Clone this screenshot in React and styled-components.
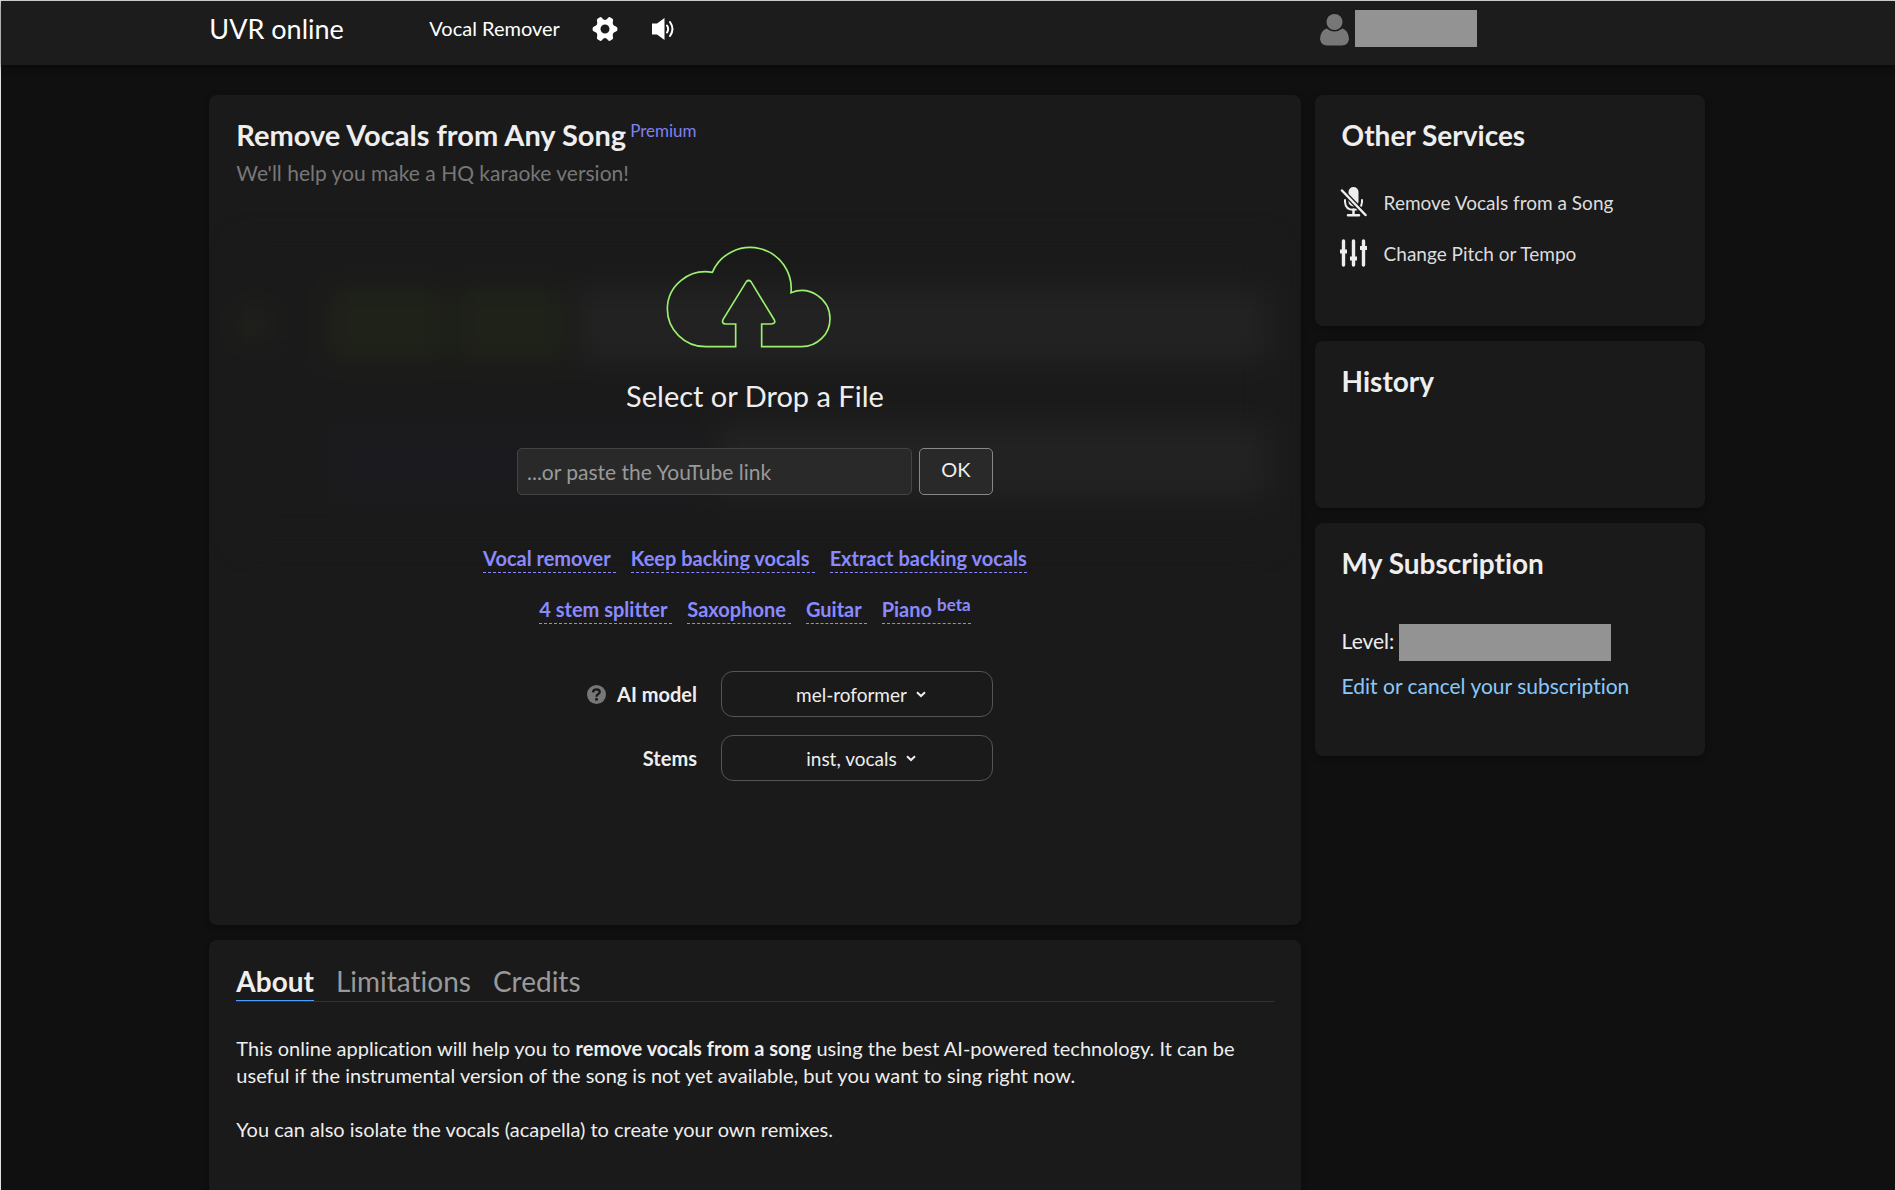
import React, { useState } from "react";
import styled, { createGlobalStyle } from "styled-components";

const GlobalStyle = createGlobalStyle`
  * { box-sizing: border-box; }
  body {
    margin: 0;
    background: #101010;
    color: #eee;
    font: 21px/27px Lato, "Noto Sans", sans-serif;
    font-variant-ligatures: none;
  }
  button, input, select { font: inherit; color: inherit; font-variant-ligatures: inherit; }
  h1, h2, p { margin: 0; }
  a { text-decoration: none; }
`;

const Page = styled.div`
  display: flex;
  flex-direction: column;
  min-height: 100vh;
  border-top: 1px solid #dfe3e1;
  border-left: 1px solid #dfe3e1;
`;

const Header = styled.header`
  display: grid;
  grid-template-columns: minmax(0, 1fr) 390px;
  column-gap: 14px;
  height: 64px;
  padding: 0 calc(10% + 1px) 0 11%;
  background: #1c1c1c;
  box-shadow: 0 2px 6px rgba(0, 0, 0, 0.5);
`;

const Nav = styled.nav`
  display: flex;
  align-items: center;
  height: 55px;
  color: #fff;
`;

const Logo = styled.a`
  width: 220px;
  color: #fff;
  font-size: 27px;
  line-height: 36px;
`;

const NavLink = styled.a`
  width: 163px;
  color: #fff;
  font-size: 20px;
`;

const IconButton = styled.button`
  display: flex;
  align-items: center;
  width: 60px;
  padding: 0;
  border: 0;
  background: none;
  color: #fff;
  cursor: pointer;
`;

const Account = styled.div`
  display: flex;
  align-items: center;
  gap: 6px;
  height: 54px;
  padding-left: 5px;
  color: #777;
  svg { margin-top: 4px; }
`;

const Masked = styled.span`
  display: block;
  width: ${(p) => p.$width};
  height: 37px;
  background: #939393;
`;

const Columns = styled.div`
  flex: 1;
  display: grid;
  grid-template-columns: minmax(0, 1fr) 390px;
  column-gap: 14px;
  padding: 30px calc(10% + 1px) 0 11%;
`;

const Stack = styled.div`
  display: flex;
  flex-direction: column;
  gap: 15px;
`;

const Card = styled.section`
  position: relative;
  min-height: ${(p) => p.$minHeight || "0"};
  padding: 22px 27px;
  border-radius: 8px;
  background: #1a1a1a;
  box-shadow: 0 2px 6px rgba(0, 0, 0, 0.35);
`;

const AboutCard = styled(Card)`
  flex: 1;
  border-radius: 8px 8px 0 0;
`;

const MainTitle = styled.h1`
  font-size: 29px;
  line-height: 36px;
  font-weight: 700;
`;

const SideTitle = styled.h2`
  font-size: 28px;
  line-height: 36px;
  font-weight: 700;
`;

const Intro = styled.div`
  position: relative;
`;

const Heading = styled.div`
  display: flex;
  align-items: flex-start;
  gap: 4px;
`;

const Premium = styled.a`
  color: #8080f0;
  font-size: 17px;
  line-height: 27px;
`;

const Subtitle = styled.p`
  padding-top: 6px;
  color: #777;
`;

const Backdrop = styled.div`
  position: absolute;
  inset: 150px 32px auto;
  display: flex;
  flex-direction: column;
  gap: 62px;
  padding: 43px 0;
  background: #1a1a1a;
  filter: blur(14px);
`;

const Track = styled.div`
  display: grid;
  grid-template-columns: 24px ${(p) => p.$columns} minmax(0, 1fr);
  column-gap: 14px;
  height: 74px;
`;

const Wave = styled.span`
  margin: ${(p) => p.$inset || "0"};
  background: ${(p) => p.$color};
`;

const Uploader = styled.div`
  position: relative;
  display: flex;
  flex-direction: column;
  align-items: center;
`;

const DropZone = styled.button`
  display: flex;
  flex-direction: column;
  align-items: center;
  gap: 29px;
  margin-top: 60px;
  padding: 0;
  border: 0;
  background: none;
  font-size: 29px;
  line-height: 36px;
  cursor: pointer;
`;

const LinkForm = styled.form`
  display: flex;
  gap: 7px;
  width: 476px;
  margin-top: 34px;
`;

const UrlInput = styled.input`
  flex: 1;
  min-width: 0;
  height: 47px;
  padding: 0 9px;
  border: 1px solid #444;
  border-radius: 5px;
  background: #292929;
  &::placeholder { color: #999; opacity: 1; }
`;

const OkButton = styled.button`
  width: 74px;
  padding: 0 0 4px;
  border: 1px solid #888;
  border-radius: 5px;
  background: #292929;
  font-size: 20px;
`;

const Modes = styled.div`
  display: flex;
  flex-direction: column;
  align-items: center;
  gap: 22px;
  margin-top: 49px;
`;

const ModeRow = styled.div`
  display: flex;
  gap: 15px;
`;

const Mode = styled.a`
  height: 29px;
  padding-right: ${(p) => (p.$last ? "0" : "5px")};
  border-bottom: 1px dashed #8a8aff;
  color: #8a8aff;
  font-size: 20px;
  font-weight: 700;
  line-height: 29px;
  sup {
    margin-left: 5px;
    font-size: 17px;
    line-height: 0;
    vertical-align: 6px;
  }
`;

const Options = styled.div`
  display: grid;
  grid-template-columns: 110px 272px;
  column-gap: 24px;
  row-gap: 18px;
  align-items: center;
  margin: 47px 0 0 70px;
`;

const OptionLabel = styled.label`
  display: flex;
  justify-content: flex-end;
  align-items: center;
  gap: 11px;
  font-size: 20px;
  font-weight: 700;
  white-space: nowrap;
  svg { flex: none; }
`;

const SelectBox = styled.div`
  display: flex;
  align-items: center;
  justify-content: center;
  gap: 9px;
  height: 46px;
  padding-left: 8px;
  border: 1px solid #555;
  border-radius: 12px;
`;

const Select = styled.select`
  appearance: none;
  field-sizing: content;
  padding: 0;
  border: 0;
  background: transparent;
  font-size: 19px;
  line-height: 27px;
  option { background: #1a1a1a; }
`;

const Tabs = styled.div`
  display: flex;
  gap: 22px;
  border-bottom: 1px solid #333;
`;

const Tab = styled.button`
  height: 39px;
  padding: 0;
  border: 0;
  border-bottom: 1px solid ${(p) => (p.$active ? "#4c9dff" : "transparent")};
  background: none;
  color: ${(p) => (p.$active ? "#eee" : "#999")};
  font-size: 28px;
  font-weight: ${(p) => (p.$active ? 700 : 400)};
  line-height: 36px;
  cursor: pointer;
`;

const Article = styled.div`
  display: flex;
  flex-direction: column;
  gap: 27px;
  padding-top: 33px;
  font-size: 20px;
`;

const Services = styled.div`
  display: flex;
  flex-direction: column;
  gap: 21px;
  margin: 34px 0 0 -2px;
`;

const Service = styled.a`
  display: flex;
  align-items: center;
  gap: 17px;
  height: 30px;
  color: #ddd;
  font-size: 19px;
  svg { flex: none; }
`;

const Level = styled.div`
  display: flex;
  align-items: flex-start;
  gap: 5px;
  margin-top: 43px;
  line-height: 34px;
`;

const EditLink = styled.a`
  display: block;
  margin-top: 11px;
  color: #8ac8fa;
`;

const GearIcon = () => (
  <svg width="26" height="26" viewBox="0 0 26 26" aria-hidden="true">
    <path
      fill="currentColor"
      fillRule="evenodd"
      d="M7.500 1.500 Q9 0.500 10 2 Q11.500 4 13 4 Q14.500 4 16 2 Q17 0.500 18.500 1.500 L20.500 2.700 Q21.500 3.500 21 5 Q20.300 7.300 21.200 8.700 Q22 10 24 10.500 Q25.500 11 25.500 13 Q25.500 15 24 15.500 Q22 16 21.200 17.300 Q20.300 18.700 21 21 Q21.500 22.500 20.500 23.300 L18.500 24.500 Q17 25.500 16 24 Q14.500 22 13 22 Q11.500 22 10 24 Q9 25.500 7.500 24.500 L5.500 23.300 Q4.500 22.500 5 21 Q5.700 18.700 4.800 17.300 Q4 16 2 15.500 Q0.500 15 0.500 13 Q0.500 11 2 10.500 Q4 10 4.800 8.700 Q5.700 7.300 5 5 Q4.500 3.500 5.500 2.700 Z M13 8.500 A4.500 4.500 0 1 0 13 17.500 A4.500 4.500 0 1 0 13 8.500 Z"
    />
  </svg>
);

const SpeakerIcon = () => (
  <svg width="23" height="22" viewBox="0 0 23 22" aria-hidden="true">
    <path fill="currentColor" d="M0 5.500 H5 L12.500 0 V22 L5 16.500 H0 Z" />
    <path
      fill="none"
      stroke="currentColor"
      strokeWidth="2"
      strokeLinecap="round"
      d="M15 7.500 Q17.300 11 15 14.500 M18 4 Q23 11 18 18"
    />
  </svg>
);

const UserIcon = () => (
  <svg width="29" height="32" viewBox="0 0 29 32" aria-hidden="true">
    <ellipse cx="14.500" cy="8" rx="8" ry="8" fill="currentColor" />
    <path
      fill="currentColor"
      d="M6.500 14.500 Q14.500 20.500 22.500 14.500 Q28.500 16.500 29 25 Q28 31.500 22 31.500 H7 Q1 31.500 0 25 Q0.500 16.500 6.500 14.500 Z"
    />
  </svg>
);

const CloudIcon = () => (
  <svg width="178" height="103" viewBox="78 46 534 309" aria-hidden="true">
    <path
      fill="none"
      stroke="#9cf06c"
      strokeWidth="5"
      d="M287 348 H197 A115 114 0 0 1 82 234 A115 112 0 0 1 217 125 A123.300 123.300 0 0 1 453 186 A85 85 0 0 1 570 264 A85 84 0 0 1 485 348 H365 V280 H394 Q408 279 403 268 L333 153 Q326 146 319 153 L249 267 Q244 279 257 280 H287 Z"
    />
  </svg>
);

const HelpIcon = () => (
  <svg width="19" height="19" viewBox="0 0 19 19" aria-hidden="true">
    <circle cx="9.500" cy="9.500" r="9.500" fill="#777" />
    <path
      fill="none"
      stroke="#1a1a1a"
      strokeWidth="2.400"
      d="M6 7.300 Q6.300 4.400 9.500 4.400 Q12.700 4.500 12.700 7 Q12.600 8.400 11 9.200 Q9.500 10 9.500 11.800"
    />
    <circle cx="9.500" cy="14.300" r="1.500" fill="#1a1a1a" />
  </svg>
);

const ChevronIcon = () => (
  <svg width="10" height="7" viewBox="0 0 10 7" aria-hidden="true">
    <path fill="none" stroke="#eee" strokeWidth="2" d="M1 1.200 L5 5 L9 1.200" />
  </svg>
);

const MicOffIcon = () => (
  <svg width="27" height="30" viewBox="0 0 27 30" aria-hidden="true">
    <g fill="none" stroke="#eee" strokeLinecap="round">
      <path strokeWidth="2" d="M5 13 V15 Q5.500 22.800 13.500 22.800 Q21.500 22.800 22 15 V13" />
      <path strokeWidth="2.500" d="M13.500 22.500 V27.500 M8 28.300 H19" />
    </g>
    <rect x="8.500" y="0" width="10" height="19.500" rx="5" fill="#eee" />
    <path stroke="#1a1a1a" strokeWidth="5" d="M0 1.500 L27 29.500" />
    <path stroke="#eee" strokeWidth="2.500" strokeLinecap="round" d="M2 3.500 L25.500 28" />
  </svg>
);

const SlidersIcon = () => (
  <svg width="27" height="28" viewBox="0 0 27 28" aria-hidden="true">
    <path
      stroke="#eee"
      strokeWidth="3.400"
      strokeLinecap="round"
      d="M3.500 2 V26 M13.500 2 V26 M23.500 2 V26"
    />
    <path stroke="#eee" strokeWidth="4" d="M0 12.500 H7 M10 19.500 H17 M20 9 H27" />
  </svg>
);

const modeRows = [
  ["Vocal remover", "Keep backing vocals", "Extract backing vocals"],
  ["4 stem splitter", "Saxophone", "Guitar", "Piano"],
];

const tabNames = ["About", "Limitations", "Credits"];

function Waveforms() {
  return (
    <Backdrop aria-hidden="true">
      <Track $columns="36px 114px 108px">
        <Wave $color="#24261e" $inset="22px 0" />
        <Wave $color="#1a1a1a" />
        <Wave $color="#1f2219" />
        <Wave $color="#1f2219" />
        <Wave $color="#222222" />
      </Track>
      <Track $columns="36px 375px">
        <Wave $color="#1a1a1a" />
        <Wave $color="#1a1a1a" />
        <Wave $color="#1b1b1f" />
        <Wave $color="#222222" />
      </Track>
    </Backdrop>
  );
}

function SeparationOptions() {
  return (
    <Options>
      <OptionLabel htmlFor="model">
        <HelpIcon />
        AI model
      </OptionLabel>
      <SelectBox>
        <Select id="model"><option>mel-roformer</option></Select>
        <ChevronIcon />
      </SelectBox>
      <OptionLabel htmlFor="stems">Stems</OptionLabel>
      <SelectBox>
        <Select id="stems"><option>inst, vocals</option></Select>
        <ChevronIcon />
      </SelectBox>
    </Options>
  );
}

export default function App() {
  const [tab, setTab] = useState("About");
  return (
    <Page>
      <GlobalStyle />
      <Header>
        <Nav>
          <Logo href="#">UVR online</Logo>
          <NavLink href="#">Vocal Remover</NavLink>
          <IconButton aria-label="Settings"><GearIcon /></IconButton>
          <IconButton aria-label="Sound"><SpeakerIcon /></IconButton>
        </Nav>
        <Account>
          <UserIcon />
          <Masked $width="122px" />
        </Account>
      </Header>
      <Columns>
        <Stack as="main">
          <Card $minHeight="830px">
            <Waveforms />
            <Intro>
              <Heading>
                <MainTitle>Remove Vocals from Any Song</MainTitle>
                <Premium href="#">Premium</Premium>
              </Heading>
              <Subtitle>We'll help you make a HQ karaoke version!</Subtitle>
            </Intro>
            <Uploader>
              <DropZone type="button">
                <CloudIcon />
                Select or Drop a File
              </DropZone>
              <LinkForm onSubmit={(e) => e.preventDefault()}>
                <UrlInput aria-label="YouTube link" placeholder="...or paste the YouTube link" />
                <OkButton>OK</OkButton>
              </LinkForm>
              <Modes>
                {modeRows.map((row) => (
                  <ModeRow key={row[0]}>
                    {row.map((name, i) => (
                      <Mode href="#" key={name} $last={i === row.length - 1}>
                        {name}
                        {name === "Piano" && <sup>beta</sup>}
                      </Mode>
                    ))}
                  </ModeRow>
                ))}
              </Modes>
              <SeparationOptions />
            </Uploader>
          </Card>
          <AboutCard>
            <Tabs role="tablist">
              {tabNames.map((name) => (
                <Tab
                  key={name}
                  role="tab"
                  aria-selected={tab === name}
                  $active={tab === name}
                  onClick={() => setTab(name)}
                >
                  {name}
                </Tab>
              ))}
            </Tabs>
            <Article>
              <p>
                This online application will help you to <b>remove vocals from a song</b> using the
                best AI-powered technology. It can be useful if the instrumental version of the song
                is not yet available, but you want to sing right now.
              </p>
              <p>You can also isolate the vocals (acapella) to create your own remixes.</p>
            </Article>
          </AboutCard>
        </Stack>
        <Stack as="aside">
          <Card $minHeight="231px">
            <SideTitle>Other Services</SideTitle>
            <Services>
              <Service href="#"><MicOffIcon />Remove Vocals from a Song</Service>
              <Service href="#"><SlidersIcon />Change Pitch or Tempo</Service>
            </Services>
          </Card>
          <Card $minHeight="167px">
            <SideTitle>History</SideTitle>
          </Card>
          <Card $minHeight="233px">
            <SideTitle>My Subscription</SideTitle>
            <Level>Level: <Masked $width="212px" /></Level>
            <EditLink href="#">Edit or cancel your subscription</EditLink>
          </Card>
        </Stack>
      </Columns>
    </Page>
  );
}
